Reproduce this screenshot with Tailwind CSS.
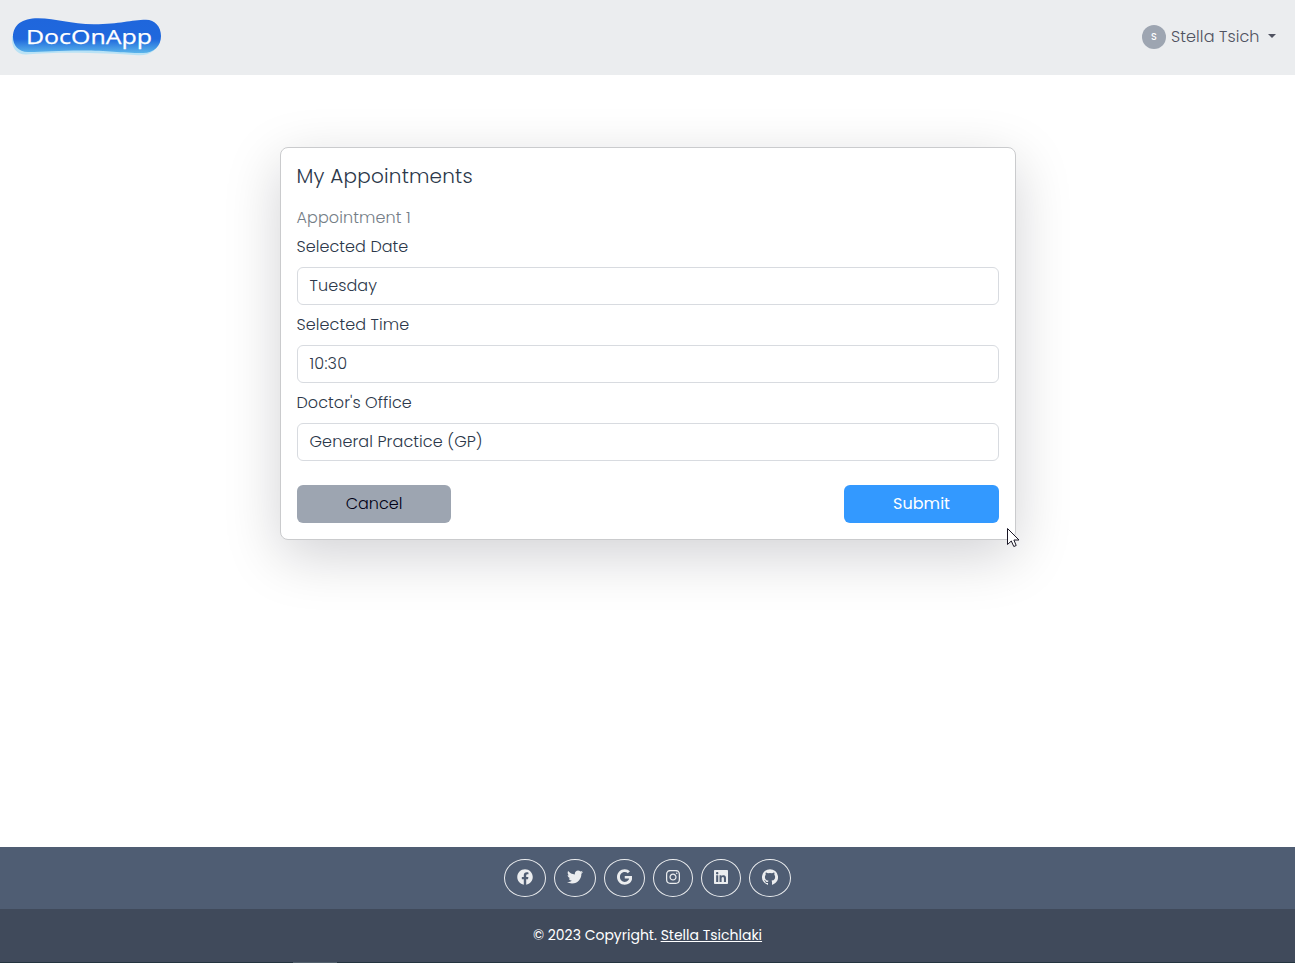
<!DOCTYPE html>
<html lang="en">
<head>
<meta charset="utf-8">
<title>DocOnApp</title>
<script src="https://cdn.jsdelivr.net/npm/@tailwindcss/browser@4"></script>
</head>
<body class="h-[963px] overflow-hidden flex flex-col bg-white font-['Poppins','Inter',sans-serif] font-light text-base leading-6 text-[#2c384a]">
<header class="h-[75px] shrink-0 bg-[#ebedef] flex items-start justify-between pl-3 pr-[19px]">
  <svg class="mt-4 -ml-px" width="152" height="42" viewBox="11 16 152 42" role="img" aria-label="DocOnApp">
    <defs><linearGradient id="g" x1="0" y1="0" x2="0" y2="1"><stop offset="0" stop-color="#1f66dc"/><stop offset=".6" stop-color="#1f68dd"/><stop offset="1" stop-color="#5ab4ea"/></linearGradient></defs>
    <path d="M12 36C11 47 16 54.500 26 54.500C60 51.500 106 53 138 55.300C150 56 158 49 160 40L140 30L30 30Z" fill="#b9e2f5"/>
    <path d="M13 37C13 25 22 18.300 38 18.300C57 18.300 70 24.300 94 24.300C120 24.300 131 19.800 146 19.800C155 19.800 161 27 161 36C161 46 154 53 143 53C120 53 108 50.500 82 50.500C58 50.500 44 52 28 52C18 52 13 45 13 37Z" fill="url(#g)"/>
    <text x="26" y="44" textLength="126" lengthAdjust="spacingAndGlyphs" font-family="Open Sans, sans-serif" font-size="20.500" font-weight="500" fill="#fff" stroke="#fff" stroke-width=".25">DocOnApp</text>
  </svg>
  <div class="flex items-center mt-[25px] h-6 text-[#4f5260]">
    <span class="size-6 rounded-full bg-[#9da5b1] text-white text-[9.6px] leading-none font-medium flex items-center justify-center">S</span>
    <span class="ml-[5px] w-[97px] whitespace-nowrap tracking-[0.1px]">Stella Tsich</span>
    <span class="border-x-4 border-x-transparent border-t-4 border-t-[#4f5260] -mt-0.5"></span>
  </div>
</header>
<main class="flex-1 pt-[72px] flex flex-col items-center">
  <section class="w-[736px] h-[393px] ml-px border border-[#cacbcd] rounded-lg bg-white shadow-[0_16px_56px_rgba(0,0,21,0.18)] px-4 pt-4">
    <h1 class="text-xl leading-6 -ml-px pl-[0.5px] tracking-[0.2px]">My Appointments</h1>
    <h2 class="mt-[18px] -ml-px pl-[0.5px] text-[#747d86] tracking-[0.1px]">Appointment 1</h2>
    <div class="mt-[5px] -ml-px pl-[0.5px] tracking-[0.06px]">Selected Date</div>
    <div class="mt-2 h-[38px] border border-[#d8dbe0] rounded-md pl-[11.5px] py-[6px] tracking-[0.1px]">Tuesday</div>
    <div class="mt-2 -ml-px pl-[0.5px] tracking-[0.08px]">Selected Time</div>
    <div class="mt-2 h-[38px] border border-[#d8dbe0] rounded-md pl-[11.5px] py-[6px] tracking-[0.2px]">10:30</div>
    <div class="mt-2 -ml-px pl-[0.5px] tracking-[0.06px]">Doctor's Office</div>
    <div class="mt-2 h-[38px] border border-[#d8dbe0] rounded-md pl-[11.5px] py-[6px] tracking-[0.1px]">General Practice (GP)</div>
    <div class="mt-6 flex justify-between">
      <button class="w-[154px] h-[38px] rounded-md bg-[#9da5b1] text-[#000015]">Cancel</button>
      <button class="w-[155px] h-[38px] rounded-md bg-[#3399ff] text-white font-normal tracking-[0.05px]">Submit</button>
    </div>
  </section>
</main>
<footer class="shrink-0 text-white">
  <div class="h-[62px] bg-[#4f5d73] flex items-center justify-center gap-2 text-[#ebedef]">
    <a class="w-[42px] h-[38px] rounded-[50%] border border-[#ebedef] flex items-center justify-center"><svg class="h-4 w-4 -mt-0.5" viewBox="0 0 512 512" fill="currentColor"><path d="M504 256C504 119 393 8 256 8S8 119 8 256c0 123.780 90.690 226.380 209.250 245V327.690h-63V256h63v-54.640c0-62.150 37-96.480 93.670-96.480 27.140 0 55.520 4.840 55.520 4.840v61h-31.280c-30.800 0-40.410 19.120-40.410 38.730V256h68.780l-11 71.690h-57.780V501C413.310 482.380 504 379.780 504 256z"/></svg></a>
    <a class="w-[42px] h-[38px] rounded-[50%] border border-[#ebedef] flex items-center justify-center"><svg class="h-4 w-4 -mt-0.5" viewBox="0 0 512 512" fill="currentColor"><path d="M459.370 151.716c.325 4.548.325 9.097.325 13.645 0 138.720-105.583 298.558-298.558 298.558-59.452 0-114.680-17.219-161.137-47.106 8.447.974 16.568 1.299 25.340 1.299 49.055 0 94.213-16.568 130.274-44.832-46.132-.975-84.792-31.188-98.112-72.772 6.498.974 12.995 1.624 19.818 1.624 9.421 0 18.843-1.300 27.614-3.573-48.081-9.747-84.143-51.980-84.143-102.985v-1.299c13.969 7.797 30.214 12.670 47.431 13.319-28.264-18.843-46.781-51.005-46.781-87.391 0-19.492 5.197-37.360 14.294-52.954 51.655 63.675 129.300 105.258 216.365 109.807-1.624-7.797-2.599-15.918-2.599-24.040 0-57.828 46.782-104.934 104.934-104.934 30.213 0 57.502 12.670 76.670 33.137 23.715-4.548 46.456-13.320 66.599-25.340-7.798 24.366-24.366 44.833-46.132 57.827 21.117-2.273 41.584-8.122 60.426-16.243-14.292 20.791-32.161 39.308-52.628 54.253z"/></svg></a>
    <a class="w-[41px] h-[38px] rounded-[50%] border border-[#ebedef] flex items-center justify-center"><svg class="h-4 w-[15.25px] -mt-0.5" viewBox="0 0 488 512" fill="currentColor"><path d="M488 261.800C488 403.300 391.100 504 248 504 110.800 504 0 393.200 0 256S110.800 8 248 8c66.800 0 123 24.500 166.300 64.900l-67.500 64.900C258.500 52.600 94.300 116.600 94.300 256c0 86.500 69.100 156.600 153.700 156.600 98.200 0 135-70.400 140.800-106.900H248v-85.300h236.100c2.300 12.700 3.900 24.900 3.900 41.400z"/></svg></a>
    <a class="w-10 h-[38px] rounded-[50%] border border-[#ebedef] flex items-center justify-center"><svg class="h-4 w-3.5 -mt-0.5" viewBox="0 0 448 512" fill="currentColor"><path d="M224.100 141c-63.600 0-114.900 51.300-114.900 114.900s51.300 114.900 114.900 114.900S339 319.500 339 255.900 287.700 141 224.100 141zm0 189.600c-41.100 0-74.700-33.500-74.700-74.700s33.500-74.700 74.700-74.700 74.700 33.500 74.700 74.700-33.600 74.700-74.700 74.700zm146.400-194.300c0 14.900-12 26.800-26.800 26.800-14.900 0-26.800-12-26.800-26.800s12-26.800 26.800-26.800 26.800 12 26.800 26.800zm76.100 27.200c-1.700-35.900-9.900-67.700-36.200-93.900-26.200-26.200-58-34.400-93.900-36.200-37-2.100-147.900-2.100-184.900 0-35.800 1.700-67.600 9.900-93.900 36.100s-34.400 58-36.200 93.900c-2.100 37-2.100 147.900 0 184.900 1.700 35.900 9.900 67.700 36.200 93.900s58 34.400 93.900 36.200c37 2.100 147.900 2.100 184.900 0 35.900-1.700 67.700-9.900 93.900-36.200 26.200-26.200 34.400-58 36.200-93.900 2.100-37 2.100-147.800 0-184.800zM398.800 388c-7.800 19.600-22.900 34.700-42.600 42.600-29.500 11.700-99.500 9-132.100 9s-102.700 2.600-132.100-9c-19.600-7.800-34.700-22.900-42.600-42.600-11.700-29.500-9-99.500-9-132.100s-2.600-102.700 9-132.100c7.800-19.600 22.900-34.700 42.600-42.600 29.500-11.700 99.500-9 132.100-9s102.700-2.600 132.100 9c19.600 7.800 34.700 22.900 42.600 42.600 11.700 29.500 9 99.500 9 132.100s2.700 102.700-9 132.100z"/></svg></a>
    <a class="w-10 h-[38px] rounded-[50%] border border-[#ebedef] flex items-center justify-center"><svg class="h-4 w-3.5 -mt-0.5" viewBox="0 0 448 512" fill="currentColor"><path d="M416 32H31.900C14.300 32 0 46.500 0 64.300v383.400C0 465.500 14.300 480 31.900 480H416c17.600 0 32-14.500 32-32.300V64.300c0-17.800-14.400-32.300-32-32.300zM135.400 416H69V202.200h66.500V416zm-33.200-243c-21.300 0-38.500-17.300-38.500-38.500S80.900 96 102.200 96c21.200 0 38.500 17.300 38.500 38.500 0 21.300-17.200 38.500-38.500 38.500zm282.100 243h-66.400V312c0-24.800-.5-56.700-34.500-56.700-34.600 0-39.900 27-39.900 54.900V416h-66.400V202.200h63.700v29.200h.9c8.900-16.800 30.600-34.500 62.900-34.500 67.200 0 79.700 44.300 79.700 101.900V416z"/></svg></a>
    <a class="w-[42px] h-[38px] rounded-[50%] border border-[#ebedef] flex items-center justify-center"><svg class="h-4 w-4 -mt-0.5" viewBox="0 0 16 16" fill="currentColor"><path d="M8 .2a8 8 0 0 0-2.530 15.590c.4.070.55-.17.55-.38v-1.490c-2.010.37-2.530-.49-2.690-.94-.09-.23-.48-.94-.82-1.130-.28-.15-.68-.52-.01-.53.630-.01 1.080.58 1.230.82.720 1.210 1.870.87 2.330.66.070-.52.28-.87.510-1.070-1.780-.2-3.640-.89-3.640-3.950 0-.87.310-1.590.82-2.150-.08-.2-.36-1.020.08-2.120 0 0 .67-.21 2.200.82a7.400 7.400 0 0 1 4 0c1.530-1.040 2.200-.82 2.200-.82.44 1.100.16 1.920.08 2.120.51.560.82 1.270.82 2.150 0 3.070-1.870 3.750-3.650 3.950.29.250.54.730.54 1.480v2.200c0 .21.150.46.550.38A8 8 0 0 0 8 .2z"/></svg></a>
  </div>
  <div class="h-[54px] bg-[#404a5b] border-b border-[#24343f] flex items-start pt-4 justify-center text-sm leading-5 font-normal">
    <span class="whitespace-nowrap">© 2023 Copyright. <a class="underline">Stella Tsichlaki</a></span>
  </div>
</footer>
<svg class="absolute left-[1007px] top-[528px]" width="13" height="20" viewBox="0 0 13 20"><path d="M.5.500V16.500L4.300 13L6.800 18.500L9.200 17.500L6.900 12H12Z" fill="#fff" stroke="#1a1726" stroke-width="1"/></svg>
<div class="absolute left-[293px] top-[962px] w-11 h-px bg-[#53616d]"></div>
</body>
</html>
